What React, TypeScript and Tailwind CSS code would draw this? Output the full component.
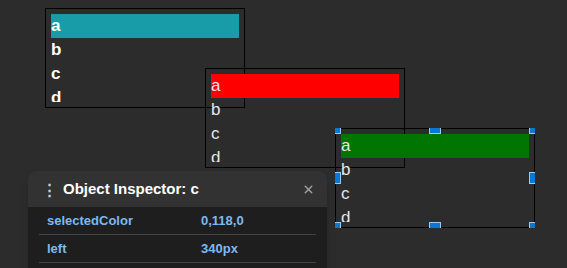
import { X } from 'lucide-react'

type Box = {
  left: number
  top: number
  color: string
  text: string
  weight: string
  selected?: boolean
}

const items = ['a', 'b', 'c', 'd']

const handle = 'absolute w-[12px] h-[12px] bg-[#0a78d2] border border-white/60'

function ListBox({ left, top, color, text, weight, selected }: Box) {
  return (
    <div className="absolute w-[200px] h-[100px] overflow-hidden" style={{ left, top }}>
      <div className="w-full h-full border border-black p-[5px]">
        <div className="h-full overflow-hidden">
          {items.map((it, i) => (
            <div
              key={it}
              className={`h-[24px] leading-[24px] text-[17px] ${weight} ${text}`}
              style={i === 0 ? { backgroundColor: color } : undefined}
            >
              {it}
            </div>
          ))}
        </div>
      </div>
      {selected && (
        <>
          <span className={`${handle} -left-[6px] -top-[6px]`} />
          <span className={`${handle} left-[94px] -top-[6px]`} />
          <span className={`${handle} -right-[6px] -top-[6px]`} />
          <span className={`${handle} -left-[6px] top-[44px]`} />
          <span className={`${handle} -right-[6px] top-[44px]`} />
          <span className={`${handle} -left-[6px] -bottom-[6px]`} />
          <span className={`${handle} left-[94px] -bottom-[6px]`} />
          <span className={`${handle} -right-[6px] -bottom-[6px]`} />
        </>
      )}
    </div>
  )
}

const props = [
  { name: 'selectedColor', value: '0,118,0' },
  { name: 'left', value: '340px' },
]

export default function App() {
  return (
    <div
      className="relative w-[567px] h-[268px] overflow-hidden bg-[#2c2c2c]"
      style={{ fontFamily: '"Liberation Sans", Arial, sans-serif' }}
    >
      <ListBox left={45} top={8} color="#189ca8" text="text-white" weight="font-bold" />
      <ListBox left={205} top={68} color="#ff0000" text="text-[#e6e6e6]" weight="font-normal" />
      <ListBox left={335} top={128} color="#007600" text="text-[#e6e6e6]" weight="font-normal" selected />

      <div className="absolute left-[28px] top-[171px] w-[299px] h-[110px] rounded-t-lg overflow-hidden bg-[#1e1e1e] shadow-lg">
        <div className="h-[36px] bg-[#323232] flex items-center pl-[14px] pr-[12px]">
          <span className="text-[#d0d0d0] text-[15px] font-bold leading-none w-[21px]">⋮</span>
          <span className="text-white text-[15px] font-bold flex-1">Object Inspector: c</span>
          <X size={13} strokeWidth={2.5} className="text-[#a0a0a0]" />
        </div>
        <div className="px-[11px]">
          {props.map((p) => (
            <div key={p.name} className="h-[28px] flex items-center border-b border-[#444] pl-[8px] text-[13px] font-bold text-[#7cbaf0]">
              <span className="w-[154px]">{p.name}</span>
              <span>{p.value}</span>
            </div>
          ))}
        </div>
      </div>
    </div>
  )
}
